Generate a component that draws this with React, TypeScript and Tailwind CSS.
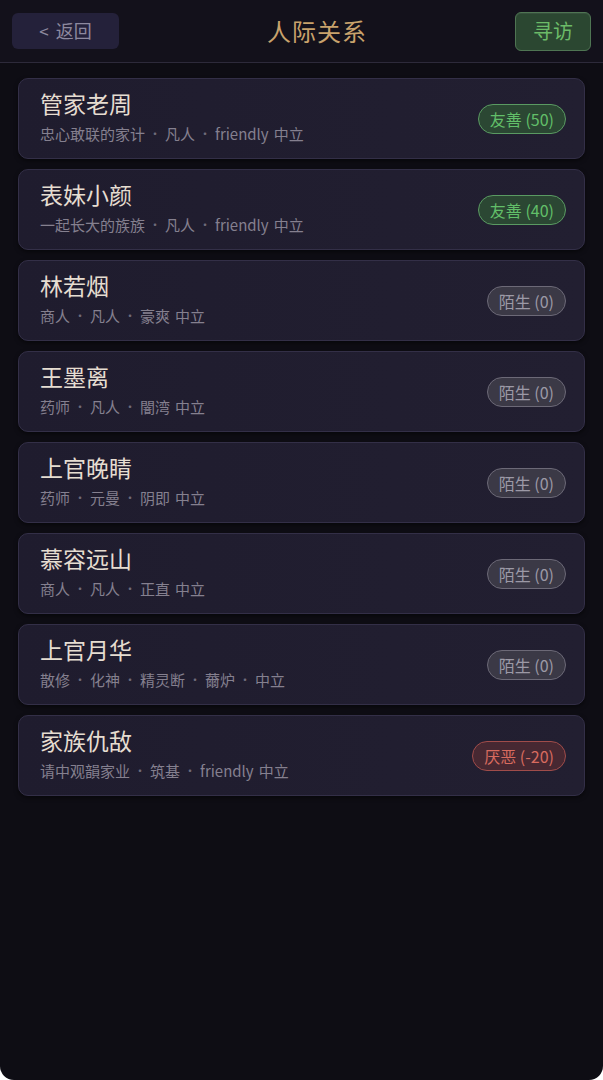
type Tone = 'good' | 'neutral' | 'bad'

type Person = {
  name: string
  desc: string[]
  tail: string
  label: string
  tone: Tone
}

const PEOPLE: Person[] = [
  { name: '管家老周', desc: ['忠心敢联的家计', '凡人', 'friendly'], tail: '中立', label: '友善 (50)', tone: 'good' },
  { name: '表妹小颜', desc: ['一起长大的族族', '凡人', 'friendly'], tail: '中立', label: '友善 (40)', tone: 'good' },
  { name: '林若烟', desc: ['商人', '凡人', '豪爽'], tail: '中立', label: '陌生 (0)', tone: 'neutral' },
  { name: '王墨离', desc: ['药师', '凡人', '闇湾'], tail: '中立', label: '陌生 (0)', tone: 'neutral' },
  { name: '上官晚睛', desc: ['药师', '元曼', '阴即'], tail: '中立', label: '陌生 (0)', tone: 'neutral' },
  { name: '慕容远山', desc: ['商人', '凡人', '正直'], tail: '中立', label: '陌生 (0)', tone: 'neutral' },
  { name: '上官月华', desc: ['散修', '化神', '精灵断', '薾炉', '中立'], tail: '', label: '陌生 (0)', tone: 'neutral' },
  { name: '家族仇敌', desc: ['请中观韻家业', '筑基', 'friendly'], tail: '中立', label: '厌恶 (-20)', tone: 'bad' },
]

const badgeClass: Record<Tone, string> = {
  good: 'border-[#5a9a62] bg-[#2b4733] text-[#62bf69]',
  neutral: 'border-[#6c6977] bg-[#3b3946] text-[#9c99a6]',
  bad: 'border-[#a04c4a] bg-[#472832] text-[#d86b5f]',
}

export default function App() {
  return (
    <div className="bg-white">
      <div
        className="min-h-[1080px] bg-[#0e0d14] rounded-b-[14px] overflow-hidden"
        style={{ fontFamily: '"Noto Sans CJK SC", "Noto Sans", sans-serif' }}
      >
        {/* Header */}
        <div className="h-[63px] flex items-center justify-between px-3 bg-[#13111b] border-b border-[#2d2a3a]">
          <button className="h-[36px] w-[107px] -mt-[1px] rounded-md bg-[#24213a] flex items-center justify-center gap-[7px] text-[18px] text-[#8d899f]">
            <span className="text-[17px] text-[#8d899f]">&lt;</span>
            <span>返回</span>
          </button>
          <h1 className="text-[24px] text-[#c8a26c] tracking-[1px]">人际关系</h1>
          <button className="h-[39px] w-[76px] rounded-md bg-[#2b4731] border border-[#4f7553] text-[20px] text-[#6cbb68] shadow-[inset_0_1px_0_rgba(255,255,255,0.06)]">
            寻访
          </button>
        </div>

        {/* List */}
        <div className="flex flex-col gap-[10px] px-[18px] pt-[15px]">
          {PEOPLE.map((p) => (
            <div
              key={p.name}
              className="h-[81px] rounded-[10px] border border-[#332f47] bg-gradient-to-r from-[#1f1c2e] to-[#221f31] flex items-center justify-between pl-[21px] pr-[18px] shadow-[0_2px_4px_rgba(0,0,0,0.5)]"
            >
              <div className="flex flex-col pb-[2px]">
                <span className="text-[23px] leading-[24px] text-[#e6ddd1]">{p.name}</span>
                <span className="text-[15px] leading-[20px] mt-[9px] text-[#85808f] flex items-center whitespace-pre">
                  {p.desc.map((d, i) => (
                    <span key={i} className="flex items-center">
                      {i > 0 && <span className="w-[20px] text-center text-[12px] text-[#6f6b7a]">·</span>}
                      {d}
                    </span>
                  ))}
                  {p.tail && <span className="ml-[5px]">{p.tail}</span>}
                </span>
              </div>
              <span
                className={`h-[30px] px-[11px] rounded-full border-[1.5px] flex items-center text-[16px] ${badgeClass[p.tone]}`}
              >
                {p.label}
              </span>
            </div>
          ))}
        </div>
      </div>
    </div>
  )
}
